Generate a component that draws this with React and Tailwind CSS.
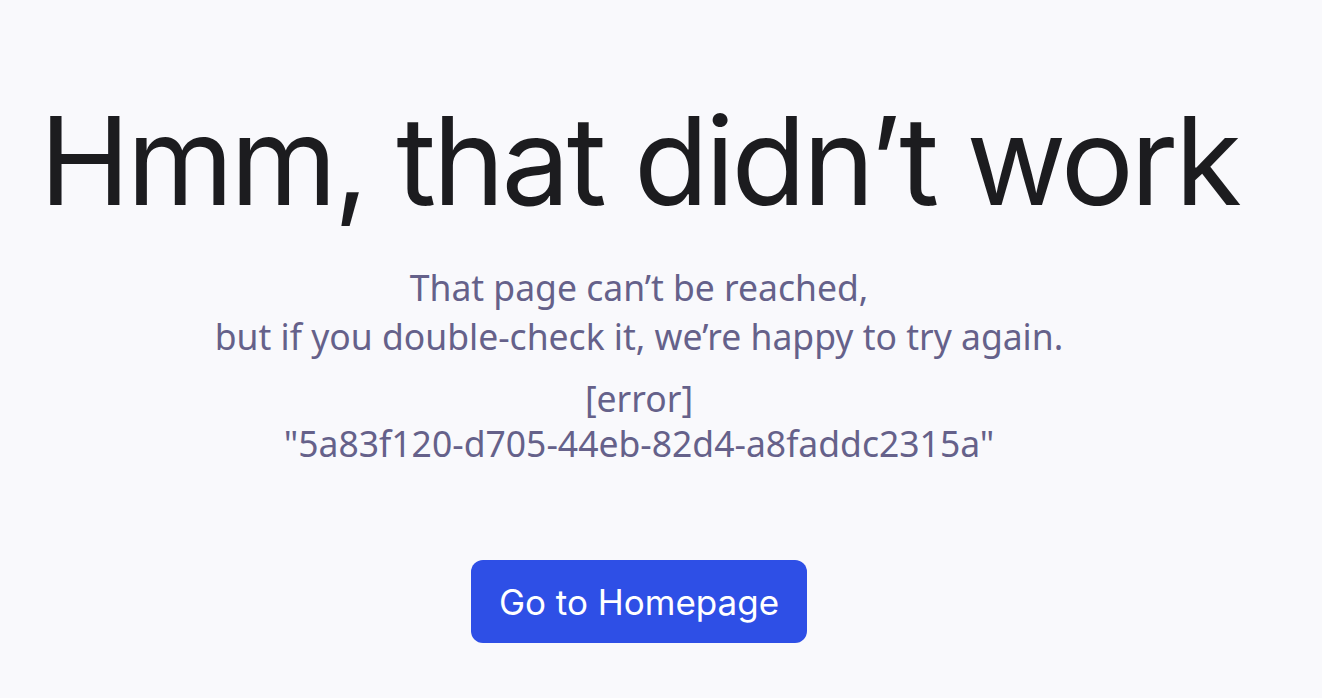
import React from "react";

const App = () => {
  return (
    <div className="min-h-screen w-full bg-[#f9f9fc] pr-[44px]">
      <div className="flex flex-col items-center pt-[88px] text-center">
        <h1 className="font-['Inter',sans-serif] text-[122px] leading-[1.2] font-normal tracking-[-0.028em] text-[#1c1c1f] whitespace-nowrap">
          Hmm, that didn’t work
        </h1>

        <div className="mt-[29px] font-['Noto_Sans','Open_Sans',sans-serif] text-[35.5px] leading-[49px] text-[#65618a]">
          <p>That page can’t be reached,</p>
          <p>but if you double-check it, we’re happy to try again.</p>
        </div>

        <div className="mt-[15px] font-['Noto_Sans','Open_Sans',sans-serif] text-[35.5px] leading-[45px] text-[#65618a]">
          <p>[error]</p>
          <p>"5a83f120-d705-44eb-82d4-a8faddc2315a"</p>
        </div>

        <button className="mt-[94px] h-[83px] w-[336px] rounded-[12px] bg-[#2e4fe6] font-['Inter',sans-serif] text-[35px] text-white">
          Go to Homepage
        </button>
      </div>
    </div>
  );
};

export default App;
